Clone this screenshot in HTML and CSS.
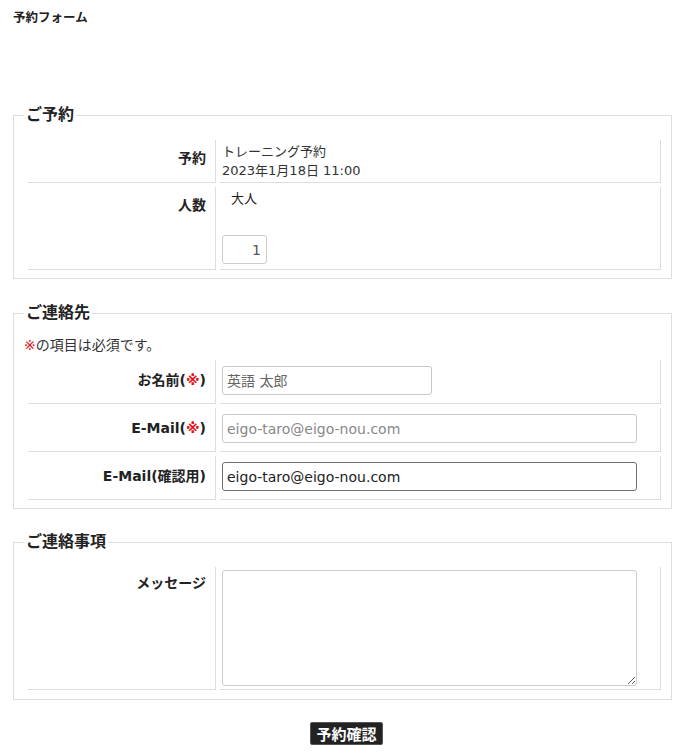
FILE: index.html
```html
<!DOCTYPE html>
<html lang="ja">
<head>
    <meta charset="UTF-8">
    <meta name="viewport" content="width=device-width, initial-scale=1.0">
    <title>予約フォーム</title>
    <link rel="stylesheet" href="styles.css">
</head>
<body>
    <h1 class="page-title">予約フォーム</h1>

    <form class="reserve-form" onsubmit="return false;">
        <fieldset class="form-box box-reserve">
            <legend>ご予約</legend>
            <table class="form-table">
                <tr>
                    <th>予約</th>
                    <td>
                        <div class="plan-name">トレーニング予約</div>
                        <div class="plan-date">2023年1月18日 11:00</div>
                    </td>
                </tr>
                <tr>
                    <th>人数</th>
                    <td>
                        <div class="count-label">大人</div>
                        <input type="number" class="count-input" value="1" min="0">
                    </td>
                </tr>
            </table>
        </fieldset>

        <fieldset class="form-box box-contact">
            <legend>ご連絡先</legend>
            <p class="note"><span class="req">※</span>の項目は必須です。</p>
            <table class="form-table">
                <tr>
                    <th>お名前(<span class="req">※</span>)</th>
                    <td><input type="text" class="text-input name-input" placeholder="英語 太郎"></td>
                </tr>
                <tr>
                    <th>E-Mail(<span class="req">※</span>)</th>
                    <td><input type="email" class="text-input mail-input" placeholder="eigo-taro@eigo-nou.com"></td>
                </tr>
                <tr>
                    <th>E-Mail(確認用)</th>
                    <td><input type="email" class="text-input mail-input confirm-input" value="eigo-taro@eigo-nou.com"></td>
                </tr>
            </table>
        </fieldset>

        <fieldset class="form-box box-message">
            <legend>ご連絡事項</legend>
            <table class="form-table">
                <tr>
                    <th>メッセージ</th>
                    <td><textarea class="message-input"></textarea></td>
                </tr>
            </table>
        </fieldset>

        <div class="submit-area">
            <button type="submit" class="submit-button">予約確認</button>
        </div>
    </form>
</body>
</html>
```

FILE: styles.css
```css
body {
    font-family: "DejaVu Sans", "Noto Sans CJK JP", sans-serif;
    color: #333;
    margin: 0;
    padding: 9px 17px 20px 13px;
    background-color: #fff;
}
.page-title {
    font-size: 12.5px;
    line-height: 18px;
    font-weight: bold;
    color: #222;
    margin: 0 0 78px;
}
.form-box {
    margin: 0 0 24px;
    padding: 11px 6px 4px 10px;
    border: 1px solid #ddd;
}
.form-box legend {
    font-size: 16px;
    line-height: 20px;
    font-weight: bold;
    color: #222;
    padding: 0 2px;
}
.box-contact {
    padding-top: 12px;
    margin-bottom: 23px;
}
.box-message {
    padding-bottom: 5px;
}
.note {
    margin: 0 0 1px;
    font-size: 14px;
    line-height: 20px;
}
.req {
    color: #e8101a;
}
.form-table {
    width: 100%;
    border-collapse: separate;
    border-spacing: 4px;
}
.form-table th {
    width: 178px;
    padding: 8px 9px 0 0;
    text-align: right;
    vertical-align: top;
    font-size: 14px;
    line-height: 20px;
    font-weight: bold;
    color: #222;
    border-right: 1px solid #ddd;
    border-bottom: 1px solid #ddd;
}
.box-contact .form-table th {
    padding-top: 10px;
}
.box-message .form-table th {
    padding-top: 6px;
}
.form-table td {
    padding: 2px;
    vertical-align: top;
    font-size: 13px;
    line-height: 19px;
    border-right: 1px solid #ddd;
    border-bottom: 1px solid #ddd;
}
.count-label {
    padding-left: 9px;
    color: #222;
}
.count-input {
    display: block;
    box-sizing: border-box;
    width: 45px;
    height: 29px;
    margin: 27px 0 3px;
    padding: 0 5px 0 0;
    border: 1px solid #ccc;
    border-radius: 3px;
    text-align: right;
    font-family: inherit;
    font-size: 14px;
    color: #555;
}
.count-input::-webkit-inner-spin-button,
.count-input::-webkit-outer-spin-button {
    -webkit-appearance: none;
    margin: 0;
}
.text-input {
    display: block;
    box-sizing: border-box;
    height: 29px;
    margin: 4px 0 6px;
    padding: 0 4px;
    border: 1px solid #c8c8c8;
    border-radius: 3px;
    font-family: inherit;
    font-size: 14px;
    color: #222;
}
.text-input::placeholder {
    color: #888;
}
.name-input::placeholder {
    color: #666;
}
.name-input {
    width: 210px;
}
.mail-input {
    width: 415px;
}
.confirm-input {
    border-color: #6f6f6f;
}
.message-input {
    display: block;
    box-sizing: border-box;
    width: 415px;
    height: 116px;
    margin: 1px 0;
    border: 1px solid #ccc;
    border-radius: 3px;
    font-family: inherit;
    font-size: 14px;
}
.submit-area {
    text-align: center;
    padding-left: 8px;
    margin-top: -2px;
}
.submit-button {
    font-family: "Noto Sans CJK JP", sans-serif;
    font-size: 15px;
    line-height: 17px;
    font-weight: bold;
    color: #fff;
    background-color: #222;
    border: 1px solid #555;
    border-radius: 2px;
    padding: 2px 5px;
    cursor: pointer;
}
```
